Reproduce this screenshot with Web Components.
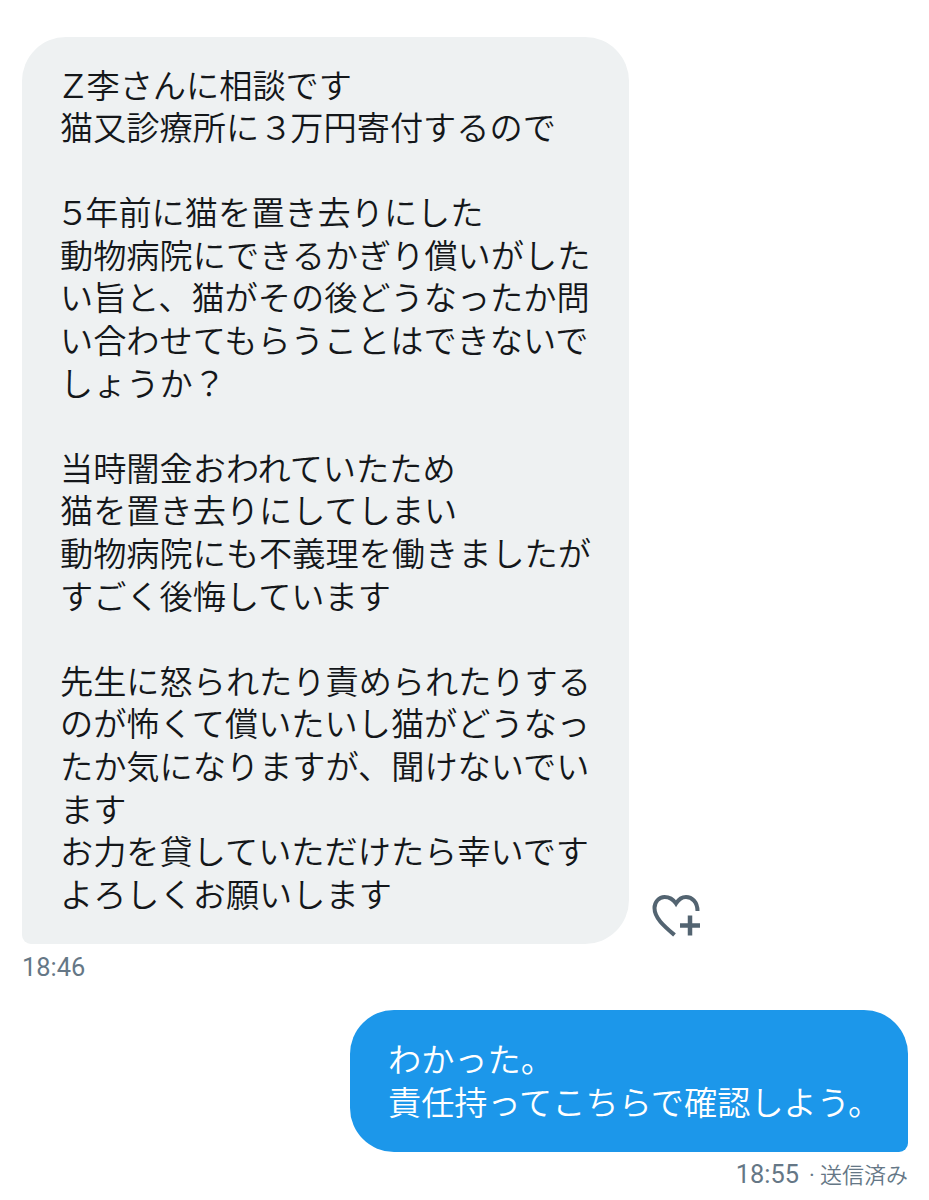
<!DOCTYPE html>
<html lang="ja">
<head>
<meta charset="utf-8">
<title>DM</title>
<style>
  html, body { margin: 0; background: #fff; }
  body { font-family: "Noto Sans CJK JP", "Noto Sans", sans-serif; }
</style>
</head>
<body>
<dm-thread>
  <dm-message time="18:46" reaction><span class="line"><span class="wide">&#xFF3A;</span>李さんに相談です</span><span class="line">猫又診療所に<span class="wide" style="margin:0 2px 0 4px">&#xFF13;</span>万円寄付するので</span>
<span class="line"><span class="wide">&#xFF15;</span>年前に猫を置き去りにした</span>動物病院にできるかぎり償いがした
い旨と、猫がその後どうなったか問
い合わせてもらうことはできないで
しょうか&#xFF1F;

当時闇金おわれていたため
猫を置き去りにしてしまい
動物病院にも不義理を働きましたが
すごく後悔しています

先生に怒られたり責められたりする
のが怖くて償いたいし猫がどうなっ
たか気になりますが、聞けないでい
ます
お力を貸していただけたら幸いです
よろしくお願いします</dm-message>
  <dm-message time="18:55" status="送信済み" sent>わかった。
責任持ってこちらで確認しよう。</dm-message>
</dm-thread>

<script>
class DmThread extends HTMLElement {
    connectedCallback() {
        this.attachShadow({ mode: 'open' });
        this.shadowRoot.innerHTML = `
            <style>
                :host {
                    display: flex;
                    flex-direction: column;
                    gap: 28px;
                    padding: 37px 21px 0 22px;
                    height: 1200px;
                    box-sizing: border-box;
                    overflow: hidden;
                }
            </style>
            <slot></slot>
        `;
    }
}

class HeartPlus extends HTMLElement {
    connectedCallback() {
        this.attachShadow({ mode: 'open' });
        this.shadowRoot.innerHTML = `
            <style>
                :host { display: block; width: 50px; height: 44px; }
                svg { display: block; }
            </style>
            <svg width="50" height="44" viewBox="0 0 50 44" fill="none" stroke="#536471" stroke-width="4">
                <path d="M45.5 17 C45.5 8 40 3 34 3 C30 3 26.5 5.5 24 9.5 C21 5 17 3 12.5 3 C7 3 2.5 8 2.5 14 C2.5 24 12 32 22.5 41"/>
                <path d="M38 21.5 V41.5 M28 31.5 H48" stroke-width="4.5"/>
            </svg>
        `;
    }
}

class DmMessage extends HTMLElement {
    connectedCallback() {
        const time = this.getAttribute('time');
        const status = this.getAttribute('status');
        const sent = this.hasAttribute('sent');
        this.attachShadow({ mode: 'open' });
        this.shadowRoot.innerHTML = `
            <style>
                :host {
                    display: flex;
                    flex-direction: column;
                    align-items: ${sent ? 'flex-end' : 'flex-start'};
                    gap: ${sent ? '6px' : '8px'};
                }
                .row {
                    display: flex;
                    align-items: flex-end;
                    gap: 23px;
                }
                .bubble {
                    box-sizing: border-box;
                    white-space: pre;
                    font-size: 33.2px;
                    font-weight: 350;
                    line-height: 42.6px;
                    border-radius: 44px;
                    width: ${sent ? '558px' : '607px'};
                    padding: ${sent ? '27.5px 30px 29.5px 38px' : '25.5px 30px 29.5px 38px'};
                    background: ${sent ? '#1c97ea' : '#eef1f2'};
                    color: ${sent ? '#fff' : '#14171a'};
                    border-${sent ? 'bottom-right' : 'bottom-left'}-radius: 9px;
                }
                ::slotted(.line) { display: block; }
                heart-plus { margin-bottom: 6px; }
                .meta {
                    display: flex;
                    align-items: baseline;
                    font-family: Roboto, "Liberation Sans", sans-serif;
                    font-size: 25.4px;
                    line-height: 30px;
                    color: #657786;
                    white-space: pre;
                }
                .dot {
                    width: 10px;
                    margin: 0 3px 0 8px;
                    text-align: center;
                    font-size: 22px;
                }
                .status {
                    font-family: "Noto Sans CJK JP", sans-serif;
                    font-size: 22px;
                    font-weight: 350;
                }
            </style>
            <div class="row">
                <div class="bubble"><slot></slot></div>
                ${this.hasAttribute('reaction') ? '<heart-plus></heart-plus>' : ''}
            </div>
            <div class="meta">${time}${status ? `<span class="dot">·</span><span class="status">${status}</span>` : ''}</div>
        `;
        // the latin-looking full width chars sit tighter in the original font
        this.querySelectorAll('.wide').forEach(el => {
            el.style.fontFeatureSettings = '"palt"';
        });
    }
}

customElements.define('heart-plus', HeartPlus);
customElements.define('dm-message', DmMessage);
customElements.define('dm-thread', DmThread);
</script>
</body>
</html>
